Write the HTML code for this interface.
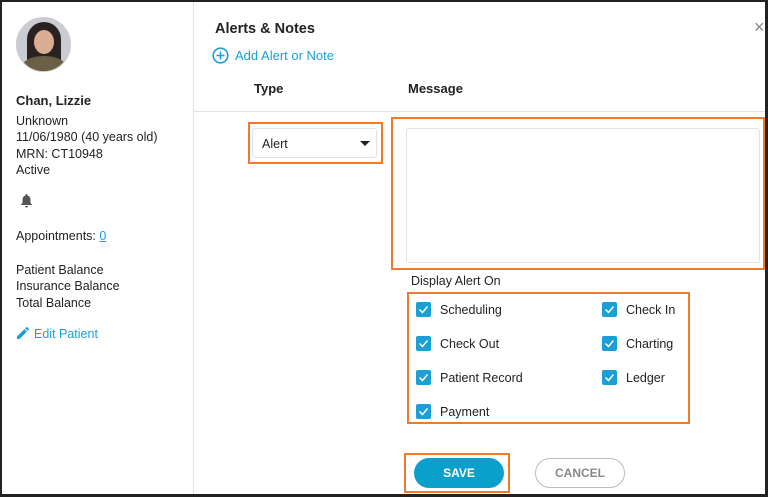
<!DOCTYPE html>
<html><head><style>
*{box-sizing:border-box;margin:0;padding:0}
body{width:768px;height:497px;background:#fff;font-family:"Liberation Sans",sans-serif;color:#222;position:relative;overflow:hidden;font-size:12.5px}
.a{position:absolute;white-space:nowrap}
.frame{position:absolute;left:0;top:0;width:768px;height:497px;border:2px solid #222;border-right-width:3px;border-bottom-width:3px}
.ob{position:absolute;border:2px solid #f07a2a}
.cb{position:absolute;width:15px;height:15px;background:#1a9fd6;border-radius:2px}
.cb svg{position:absolute;left:2px;top:2px}
.t{margin-top:1px}
</style></head><body>
<div class="a" style="left:193px;top:0;width:1px;height:497px;background:#e2e2e2"></div>
<div class="a" style="left:193px;top:111px;width:575px;height:1px;background:#e2e2e2"></div>
<div class="a" style="left:16px;top:17px;width:55px;height:55px;border-radius:50%;border:1px solid #ccc;overflow:hidden;background:#c9cdd2">
<div class="a" style="left:10px;top:4px;width:34px;height:50px;border-radius:17px 17px 4px 4px;background:#2a2220"></div>
<div class="a" style="left:17px;top:12px;width:20px;height:24px;border-radius:50%;background:#d9ae92"></div>
<div class="a" style="left:4px;top:38px;width:46px;height:24px;border-radius:50% 50% 0 0;background:#6b6045"></div>
</div>
<div class="a" style="left:16px;top:93px;font-weight:bold;font-size:13px">Chan, Lizzie</div>
<div class="a" style="left:16px;top:113px;line-height:16.3px">Unknown<br>11/06/1980 (40 years old)<br>MRN: CT10948<br>Active</div>
<svg class="a" style="left:20px;top:193px" width="13" height="15" viewBox="0 0 13 15"><path d="M6.5 1c-.6 0-1 .4-1 1v.5C3.5 3 2.5 4.7 2.5 7v3L1 11.5V12h11v-.5L10.5 10V7c0-2.3-1-4-3-4.5V2c0-.6-.4-1-1-1zM5 13a1.5 1.5 0 003 0z" fill="#555"/></svg>
<div class="a" style="left:16px;top:229px">Appointments: <span style="color:#1a9fd6;text-decoration:underline">0</span></div>
<div class="a" style="left:16px;top:262px;line-height:16.3px">Patient Balance<br>Insurance Balance<br>Total Balance</div>
<svg class="a" style="left:16px;top:326px" width="14" height="14" viewBox="0 0 14 14"><path d="M1 10.5V13h2.5l7.4-7.4-2.5-2.5zM12.8 3.7a.7.7 0 000-1L11.3 1.2a.7.7 0 00-1 0L9.1 2.4l2.5 2.5z" fill="#1a9fd6"/></svg>
<div class="a" style="left:34px;top:327px;color:#1a9fd6">Edit Patient</div>

<div class="a" style="left:215px;top:21px;font-weight:bold;font-size:14.5px">Alerts &amp; Notes</div>
<svg class="a" style="left:212px;top:47px" width="17" height="17" viewBox="0 0 17 17"><circle cx="8.5" cy="8.5" r="7.3" fill="none" stroke="#1a9fd6" stroke-width="1.6"/><path d="M8.5 4.5v8M4.5 8.5h8" stroke="#1a9fd6" stroke-width="1.6"/></svg>
<div class="a" style="left:235px;top:48px;color:#1a9fd6;font-size:13px">Add Alert or Note</div>
<div class="a" style="left:754px;top:17px;color:#888;font-size:18px">×</div>
<div class="a" style="left:254px;top:81px;font-weight:bold;font-size:13px">Type</div>
<div class="a" style="left:408px;top:81px;font-weight:bold;font-size:13px">Message</div>

<div class="ob" style="left:248px;top:122px;width:135px;height:42px"></div>
<div class="a" style="left:252px;top:128px;width:125px;height:30px;border:1px solid #e2e2e2;border-radius:3px"></div>
<div class="a" style="left:262px;top:137px">Alert</div>
<div class="a" style="left:360px;top:141px;width:0;height:0;border-left:5px solid transparent;border-right:5px solid transparent;border-top:5px solid #222"></div>

<div class="ob" style="left:391px;top:117px;width:374px;height:153px"></div>
<div class="a" style="left:406px;top:128px;width:354px;height:135px;border:1px solid #e2e2e2;border-radius:3px"></div>
<div class="a" style="left:411px;top:274px">Display Alert On</div>

<div class="ob" style="left:407px;top:292px;width:283px;height:132px"></div>
<div class="cb" style="left:416px;top:302px"><svg width="11" height="11"><path d="M1.5 5.5l3 3 5-6" fill="none" stroke="#fff" stroke-width="1.5"/></svg></div>
<div class="a" style="left:440px;top:303px">Scheduling</div>
<div class="cb" style="left:416px;top:336px"><svg width="11" height="11"><path d="M1.5 5.5l3 3 5-6" fill="none" stroke="#fff" stroke-width="1.5"/></svg></div>
<div class="a" style="left:440px;top:337px">Check Out</div>
<div class="cb" style="left:416px;top:370px"><svg width="11" height="11"><path d="M1.5 5.5l3 3 5-6" fill="none" stroke="#fff" stroke-width="1.5"/></svg></div>
<div class="a" style="left:440px;top:371px">Patient Record</div>
<div class="cb" style="left:416px;top:404px"><svg width="11" height="11"><path d="M1.5 5.5l3 3 5-6" fill="none" stroke="#fff" stroke-width="1.5"/></svg></div>
<div class="a" style="left:440px;top:405px">Payment</div>
<div class="cb" style="left:602px;top:302px"><svg width="11" height="11"><path d="M1.5 5.5l3 3 5-6" fill="none" stroke="#fff" stroke-width="1.5"/></svg></div>
<div class="a" style="left:626px;top:303px">Check In</div>
<div class="cb" style="left:602px;top:336px"><svg width="11" height="11"><path d="M1.5 5.5l3 3 5-6" fill="none" stroke="#fff" stroke-width="1.5"/></svg></div>
<div class="a" style="left:626px;top:337px">Charting</div>
<div class="cb" style="left:602px;top:370px"><svg width="11" height="11"><path d="M1.5 5.5l3 3 5-6" fill="none" stroke="#fff" stroke-width="1.5"/></svg></div>
<div class="a" style="left:626px;top:371px">Ledger</div>

<div class="ob" style="left:404px;top:453px;width:106px;height:40px"></div>
<div class="a" style="left:414px;top:458px;width:90px;height:30px;border-radius:15px;background:#0b9fcc;color:#fff;font-weight:bold;text-align:center;line-height:30px;font-size:12px">SAVE</div>
<div class="a" style="left:535px;top:458px;width:90px;height:30px;border-radius:15px;border:1px solid #bbb;color:#888;font-weight:bold;text-align:center;line-height:28px;font-size:12px">CANCEL</div>
<div class="frame"></div>
</body></html>
